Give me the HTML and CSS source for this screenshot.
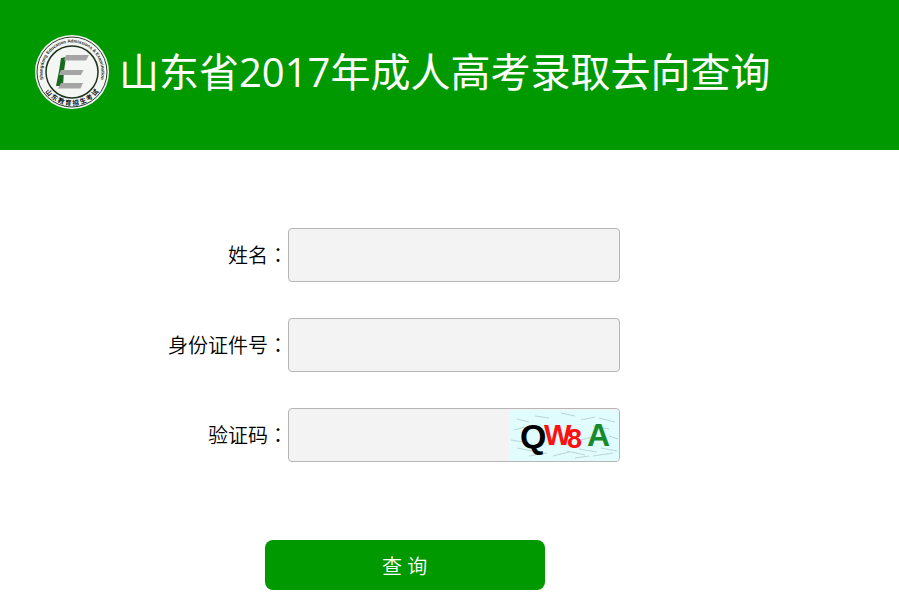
FILE: index.html
```
<!DOCTYPE html>
<html lang="zh-CN">
<head>
    <meta charset="UTF-8">
    <meta name="viewport" content="width=device-width, initial-scale=1.0">
    <title>山东省2017年成人高考录取去向查询</title>
    <link rel="stylesheet" href="styles.css">
</head>
<body>
    <header class="header">
        <svg class="logo" viewBox="0 0 148 148" aria-hidden="true">
            <defs>
                <path id="ring-top" d="M22 102 A59 59 0 1 1 126 102"/>
                <path id="ring-bottom" d="M9 86 A66 66 0 0 0 139 86"/>
            </defs>
            <circle cx="74" cy="74" r="74" fill="#f4f6f4"/>
            <circle cx="74" cy="74" r="70" fill="none" stroke="#2c3b2c" stroke-width="2"/>
            <circle cx="74" cy="74" r="52" fill="none" stroke="#1f3320" stroke-width="3"/>
            <text class="logo-en"><textPath href="#ring-top" startOffset="50%" text-anchor="middle">Shangdong Education Admissions &amp; Examination</textPath></text>
            <text class="logo-cn"><textPath href="#ring-bottom" startOffset="50%" text-anchor="middle">山 东 教 育 招 生 考 试</textPath></text>
            <path d="M52 46 L62 44 L58 72 L56 102 L42 102 L48 72 Z" fill="#176b1f"/>
            <path d="M62 40 H108 L102 51 H58 Z M52 70 H97 L92 80 H48 Z M52 96 H96 L91 107 H46 Z" fill="#a5a5a5"/>
        </svg>
        <h1 class="title">山东省2017年成人高考录取去向查询</h1>
    </header>

    <form class="query-form">
        <div class="row">
            <label for="name">姓名<span class="colon" lang="ja">：</span></label>
            <div class="field">
                <input type="text" id="name" autocomplete="off">
            </div>
        </div>
        <div class="row">
            <label for="idcard">身份证件号<span class="colon" lang="ja">：</span></label>
            <div class="field">
                <input type="text" id="idcard" autocomplete="off">
            </div>
        </div>
        <div class="row">
            <label for="code">验证码<span class="colon" lang="ja">：</span></label>
            <div class="field">
                <input type="text" id="code" autocomplete="off">
                <svg class="captcha" viewBox="0 0 110 51">
                    <rect width="110" height="51" fill="#e0fcfc"/>
                    <g fill="none" stroke="#bcd3da" stroke-width="1">
                        <path d="M8 9 L20 12 M26 6 L40 8 M52 3 L66 6 M72 10 L86 7 M90 8 L106 12 M84 16 L100 19"/>
                        <path d="M5 20 L16 17 M2 30 L14 32 M8 38 L24 41 M20 46 L38 43 M44 46 L60 42 M58 41 L76 45"/>
                        <path d="M70 39 L88 42 M84 46 L104 43 M92 38 L108 41 M66 48 L80 46 M100 26 L109 29 M72 30 L84 27"/>
                    </g>
                    <text class="code-q" x="11" y="38">Q</text>
                    <text class="code-w" x="35" y="35">W</text>
                    <text class="code-8" x="58" y="38">8</text>
                    <text class="code-a" x="78" y="36">A</text>
                </svg>
            </div>
        </div>
        <button type="button" class="submit">查 询</button>
    </form>
</body>
</html>
```

FILE: styles.css
```
* {
    box-sizing: border-box;
}

body {
    margin: 0;
    background: #fff;
    color: #000;
    font-family: "Open Sans", "Noto Sans CJK SC", sans-serif;
    font-size: 20px;
    font-weight: 350;
}

.header {
    display: flex;
    align-items: center;
    gap: 10px;
    min-height: 150px;
    padding: 0 35px 6px;
    background: #009900;
}

.logo {
    flex: none;
    width: 74px;
    height: 74px;
}

.logo-en {
    font: bold 9px "Liberation Sans", sans-serif;
    fill: #1d2b1d;
}

.logo-cn {
    font: bold 13px "Noto Sans CJK SC", sans-serif;
    fill: #111;
}

.title {
    margin: 0;
    color: #fff;
    font-size: 40px;
    font-weight: 400;
    line-height: 60px;
}

.query-form {
    display: flex;
    flex-direction: column;
    gap: 36px;
    width: 90%;
    padding: 78px 0 20px;
}

.row {
    display: flex;
    align-items: center;
}

.row label {
    width: 288px;
    line-height: 28px;
    text-align: right;
}

.colon {
    font-family: "Noto Sans CJK JP", sans-serif;
}

.field {
    display: flex;
    align-items: center;
    flex: 0 1 332px;
    height: 54px;
    overflow: hidden;
    background: #f3f3f3;
    border: 1px solid #b5b5b5;
    border-radius: 4px;
}

.field input {
    flex: 1;
    min-width: 0;
    height: 100%;
    padding: 0 10px;
    border: none;
    outline: none;
    background: transparent;
    font: inherit;
}

.captcha {
    flex: none;
    width: 110px;
    height: 51px;
}

.captcha text {
    font-family: "Liberation Sans", sans-serif;
    font-weight: bold;
}

.captcha .code-q {
    font-size: 34px;
    fill: #000;
}

.captcha .code-w {
    font-size: 29px;
    fill: #ff1010;
}

.captcha .code-8 {
    font-size: 27px;
    fill: #ff1010;
}

.captcha .code-a {
    font-size: 32px;
    fill: #178a2c;
}

.submit {
    align-self: center;
    width: 280px;
    height: 50px;
    margin-top: 42px;
    border: none;
    border-radius: 8px;
    background: #009900;
    color: #fff;
    font: inherit;
    cursor: pointer;
}
```
